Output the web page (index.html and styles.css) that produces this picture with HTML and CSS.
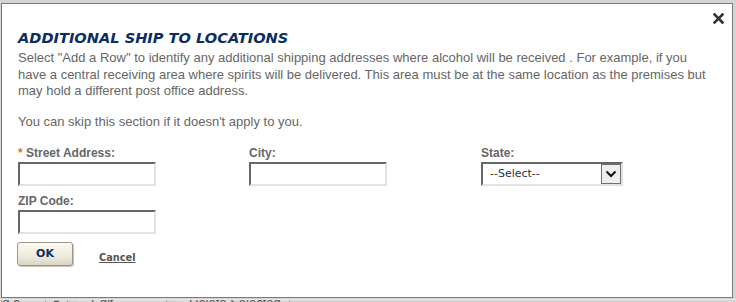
FILE: index.html
```html
<!DOCTYPE html>
<html>
<head>
<meta charset="utf-8">
<link rel="stylesheet" href="styles.css">
</head>
<body>
<div class="page">
  <div class="dialog">
    <button class="close" aria-label="Close">
      <svg width="11" height="11" viewBox="0 0 11 11"><path d="M1.5 1.5 L9.5 9.5 M9.5 1.5 L1.5 9.5" stroke="#333" stroke-width="2.6" stroke-linecap="square"/></svg>
    </button>
    <h1 class="title">ADDITIONAL SHIP TO LOCATIONS</h1>
    <p class="intro">Select "Add a Row" to identify any additional shipping addresses where alcohol will be received . For example, if you have a central receiving area where spirits will be delivered. This area must be at the same location as the premises but may hold a different post office address.</p>
    <p class="intro skip">You can skip this section if it doesn't apply to you.</p>
    <div class="form">
      <div class="field">
        <label class="label"><span class="req">*</span> Street Address:</label>
        <input class="input" type="text">
      </div>
      <div class="field">
        <label class="label">City:</label>
        <input class="input" type="text">
      </div>
      <div class="field">
        <label class="label">State:</label>
        <div class="select">
          <span class="select-text">--Select--</span>
          <span class="select-btn"><svg width="12" height="8" viewBox="0 0 12 8"><path d="M1.5 1.5 L6 6 L10.5 1.5" fill="none" stroke="#111" stroke-width="2"/></svg></span>
        </div>
      </div>
      <div class="field">
        <label class="label">ZIP Code:</label>
        <input class="input" type="text">
      </div>
    </div>
    <div class="actions">
      <button class="ok">OK</button>
      <a class="cancel" href="#">Cancel</a>
    </div>
  </div>
  <div class="toolbar">
    <span class="tb tb-add">dd a Row</span><span class="tb tb-arrow">▼</span>
    <span class="tb tb-edit">Edit Selected</span>
    <span class="tb tb-del">Delete Selected</span>
  </div>
</div>
</body>
</html>
```

FILE: styles.css
```css
html, body {
  margin: 0;
  padding: 0;
}
body {
  background: #d5d5d5;
  overflow: hidden;
  width: 736px;
  height: 302px;
}
.page {
  padding: 3px 0 0 1px;
}
.dialog {
  position: relative;
  box-sizing: border-box;
  width: 732px;
  height: 295px;
  background: #fff;
  border: 1px solid #7a7a7a;
  padding: 25px 16px 0 16px;
}
.close {
  position: absolute;
  top: 8px;
  right: 7px;
  width: 13px;
  height: 13px;
  padding: 1px;
  border: 0;
  background: none;
  display: flex;
  align-items: center;
  justify-content: center;
}
.title {
  margin: 0;
  font-family: "DejaVu Sans", Verdana, sans-serif;
  font-weight: bold;
  font-style: italic;
  font-size: 14.6px;
  line-height: 18px;
  color: #0b2d63;
}
.intro {
  margin: 3px 0 0 0;
  font-family: "Liberation Sans", Arial, sans-serif;
  font-size: 13px;
  line-height: 16.5px;
  color: #666;
  width: 700px;
}
.skip {
  margin-top: 14px;
}
.form {
  display: grid;
  grid-template-columns: 231px 232px 200px;
  row-gap: 8px;
  margin-top: 16px;
}
.field {
  display: flex;
  flex-direction: column;
}
.label {
  font-family: "Liberation Sans", Arial, sans-serif;
  font-weight: bold;
  font-size: 12px;
  line-height: 14px;
  color: #666;
  margin-bottom: 2px;
}
.req {
  color: #e07b1a;
}
.input {
  box-sizing: border-box;
  width: 138px;
  height: 24px;
  margin: 0;
  border-style: solid;
  border-width: 2px;
  border-color: #666 #e2e2e2 #e2e2e2 #666;
  background: #fff;
}
.select {
  box-sizing: border-box;
  width: 142px;
  height: 24px;
  display: flex;
  align-items: stretch;
  border-style: solid;
  border-width: 2px;
  border-color: #666 #e2e2e2 #e2e2e2 #666;
  background: #fff;
}
.select-text {
  flex: 1;
  padding-left: 7px;
  font-family: "DejaVu Sans", Verdana, sans-serif;
  font-size: 11px;
  line-height: 20px;
  color: #333;
}
.select-btn {
  width: 18px;
  border: 1px solid #707070;
  background: #eee;
  display: flex;
  align-items: center;
  justify-content: center;
}
.actions {
  display: flex;
  align-items: flex-end;
  gap: 26px;
  margin-top: 8px;
  margin-left: -1px;
}
.ok {
  box-sizing: border-box;
  width: 56px;
  height: 24px;
  margin: 0;
  border: 1px solid #9a968a;
  border-radius: 3px;
  background: linear-gradient(#fbf9f1, #eeeadc 60%, #d9d5c6);
  box-shadow: 1px 1px 0 #c8c4b6;
  font-family: "DejaVu Sans", Verdana, sans-serif;
  font-weight: bold;
  font-size: 11px;
  color: #0b2d63;
  padding: 0 0 2px 0;
}
.cancel {
  font-family: "DejaVu Sans", Verdana, sans-serif;
  font-weight: bold;
  font-size: 9.8px;
  color: #555;
  text-decoration: underline;
  line-height: 14px;
  margin-bottom: 1px;
}
.toolbar {
  display: flex;
  height: 8px;
  margin-top: 1px;
  border-top: 1px solid #e8e8e8;
  font-family: "Liberation Sans", Arial, sans-serif;
  font-size: 13px;
  color: #555;
  line-height: 16px;
  overflow: hidden;
}
.tb {
  display: block;
  margin-top: -5px;
  border-right: 1px solid #aaa;
  background: #dcdcdc;
}
.tb-add { width: 50px; margin-left: -6px; }
.tb-arrow { width: 21px; text-align: center; font-size: 9px; }
.tb-edit { box-sizing: border-box; width: 90px; margin-left: 9px; padding-left: 14px; }
.tb-del { width: 100px; margin-left: 9px; padding-left: 13px; }
```
